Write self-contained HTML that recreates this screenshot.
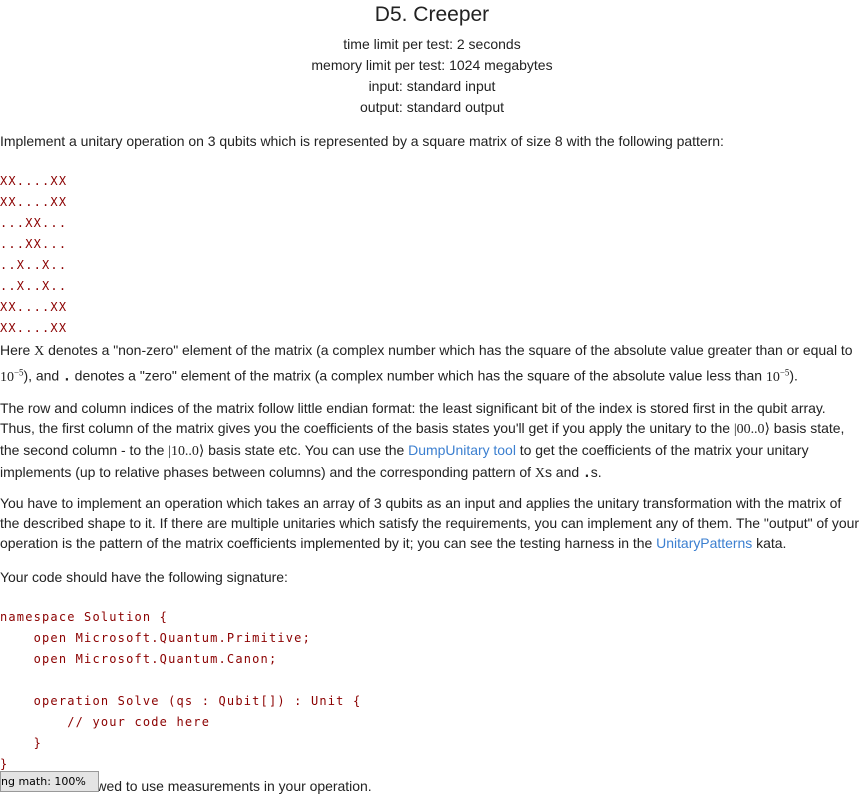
<!DOCTYPE html>
<html><head><meta charset="utf-8"><style>
body{margin:0;width:864px;height:793px;overflow:hidden;background:#fff;font-family:"Liberation Sans",sans-serif;font-size:14px;color:#222;position:relative}
.b{position:absolute;left:0;white-space:nowrap}
.c{text-align:center;width:864px}
.m{font-family:"DejaVu Sans Mono","Liberation Mono",monospace;font-size:12px;color:#8b0000;letter-spacing:1.18px;line-height:21px;white-space:pre}
.p{line-height:20px;letter-spacing:-0.025px}
.s{font-family:"Liberation Serif",serif}
a{color:#3b7fd0;text-decoration:none}
.tt{font-family:"DejaVu Sans Mono",monospace;font-weight:bold;font-size:13px}
</style></head><body>
<div class="b c" style="top:3px;font-size:21px;color:#222">D5. Creeper</div>
<div class="b c" style="top:34px;line-height:21px">time limit per test: 2 seconds<br>memory limit per test: 1024 megabytes<br>input: standard input<br>output: standard output</div>
<div class="b p" style="top:131px">Implement a unitary operation on 3 qubits which is represented by a square matrix of size 8 with the following pattern:</div>
<div class="b m" style="top:171px">XX....XX
XX....XX
...XX...
...XX...
..X..X..
..X..X..
XX....XX
XX....XX</div>
<div class="b p" style="top:340px;line-height:21px">Here <span class="s">X</span> denotes a "non-zero" element of the matrix (a complex number which has the square of the absolute value greater than or equal to<br><span class="s">10<sup style="font-size:9px">−5</sup></span>), and <span class="tt">.</span> denotes a "zero" element of the matrix (a complex number which has the square of the absolute value less than <span class="s">10<sup style="font-size:9px">−5</sup></span>).</div>
<div class="b p" style="top:398px">The row and column indices of the matrix follow little endian format: the least significant bit of the index is stored first in the qubit array.<br>Thus, the first column of the matrix gives you the coefficients of the basis states you'll get if you apply the unitary to the <span class="s">|00..0⟩</span> basis state,<br>the second column - to the <span class="s">|10..0⟩</span> basis state etc. You can use the <a>DumpUnitary tool</a> to get the coefficients of the matrix your unitary<br>implements (up to relative phases between columns) and the corresponding pattern of <span class="s">X</span>s and <span class="tt">.</span>s.</div>
<div class="b p" style="top:493px">You have to implement an operation which takes an array of 3 qubits as an input and applies the unitary transformation with the matrix of<br>the described shape to it. If there are multiple unitaries which satisfy the requirements, you can implement any of them. The "output" of your<br>operation is the pattern of the matrix coefficients implemented by it; you can see the testing harness in the <a>UnitaryPatterns</a> kata.</div>
<div class="b p" style="top:567px">Your code should have the following signature:</div>
<div class="b m" style="top:607px">namespace Solution {
    open Microsoft.Quantum.Primitive;
    open Microsoft.Quantum.Canon;

    operation Solve (qs : Qubit[]) : Unit {
        // your code here
    }
}</div>
<div class="b p" style="top:776px">You are not allowed to use measurements in your operation.</div>
<div style="position:absolute;left:0;top:771px;width:97px;height:19px;background:#e4e4e4;border:1px solid #999;font-size:11px;line-height:19px;font-family:'DejaVu Sans',sans-serif;color:#000;overflow:hidden;white-space:nowrap">ng math: 100%</div>
</body></html>
